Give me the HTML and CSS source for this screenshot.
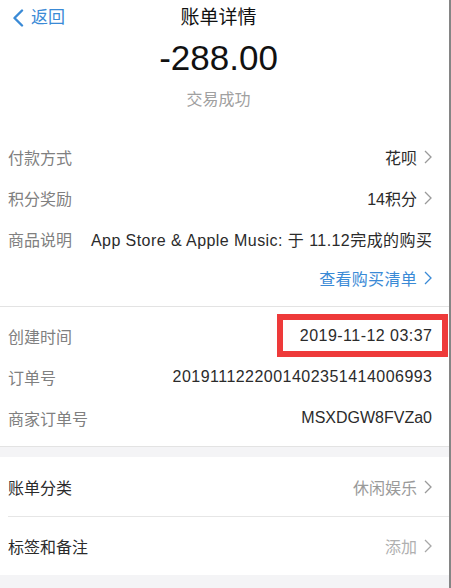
FILE: index.html
```html
<!DOCTYPE html>
<html lang="zh-CN">
<head>
<meta charset="utf-8">
<title>账单详情</title>
<link rel="stylesheet" href="styles.css">
</head>
<body>
<div class="page">
  <header class="nav">
    <a class="back">
      <svg class="back-icon" width="12" height="18" viewBox="0 0 12 18"><polyline points="10,1.5 2.5,9 10,16.5" fill="none" stroke="#3a8ad6" stroke-width="2.4" stroke-linecap="round" stroke-linejoin="round"/></svg>
      <span>返回</span>
    </a>
    <h1 class="title">账单详情</h1>
  </header>

  <section class="summary">
    <div class="amount">-288.00</div>
    <div class="status">交易成功</div>
  </section>

  <section class="group group-info">
    <div class="row">
      <span class="label">付款方式</span>
      <span class="value">花呗<svg class="chev" width="8" height="14" viewBox="0 0 8 14"><polyline points="1,1 7,7 1,13" fill="none" stroke="#9a9a9a" stroke-width="1.3"/></svg></span>
    </div>
    <div class="row">
      <span class="label">积分奖励</span>
      <span class="value">14积分<svg class="chev" width="8" height="14" viewBox="0 0 8 14"><polyline points="1,1 7,7 1,13" fill="none" stroke="#9a9a9a" stroke-width="1.3"/></svg></span>
    </div>
    <div class="row">
      <span class="label">商品说明</span>
      <span class="value desc">App Store &amp; Apple Music: 于 11.12完成的购买</span>
    </div>
    <div class="row link-row">
      <span class="link">查看购买清单<svg class="chev" width="8" height="14" viewBox="0 0 8 14"><polyline points="1,1 7,7 1,13" fill="none" stroke="#3a8ad6" stroke-width="1.3"/></svg></span>
    </div>
  </section>

  <section class="group group-order">
    <div class="row">
      <span class="label">创建时间</span>
      <span class="value num">2019-11-12 03:37</span>
      <span class="highlight"></span>
    </div>
    <div class="row">
      <span class="label">订单号</span>
      <span class="value num">2019111222001402351414006993</span>
    </div>
    <div class="row">
      <span class="label">商家订单号</span>
      <span class="value">MSXDGW8FVZa0</span>
    </div>
  </section>

  <div class="gap"></div>

  <section class="group group-extra">
    <div class="row big">
      <span class="label dark">账单分类</span>
      <span class="value muted">休闲娱乐<svg class="chev" width="8" height="14" viewBox="0 0 8 14"><polyline points="1,1 7,7 1,13" fill="none" stroke="#9a9a9a" stroke-width="1.3"/></svg></span>
    </div>
    <div class="row big">
      <span class="label dark">标签和备注</span>
      <span class="value faint">添加<svg class="chev" width="8" height="14" viewBox="0 0 8 14"><polyline points="1,1 7,7 1,13" fill="none" stroke="#a8a8a8" stroke-width="1.3"/></svg></span>
    </div>
  </section>

  <div class="bottom"></div>
</div>
</body>
</html>
```

FILE: styles.css
```css
* { box-sizing: border-box; }
html, body { margin: 0; padding: 0; }
body {
  width: 451px;
  height: 588px;
  overflow: hidden;
  background: #ffffff;
  font-family: "Liberation Sans", "Noto Sans CJK SC", sans-serif;
  color: #333333;
}
.page {
  width: 451px;
  height: 588px;
  border-right: 2px solid #858585;
  display: flex;
  flex-direction: column;
  background: #ffffff;
}
.nav {
  position: relative;
  height: 36px;
  display: flex;
  align-items: center;
  justify-content: center;
  padding-right: 12px;
}
.back {
  position: absolute;
  left: 12px;
  top: 9px;
  display: flex;
  align-items: center;
  gap: 7px;
  color: #3a8ad6;
  font-size: 17px;
  line-height: 18px;
}
.title {
  margin: 0;
  font-size: 19px;
  font-weight: normal;
  color: #111111;
  line-height: 38px;
}
.summary {
  display: flex;
  flex-direction: column;
  align-items: center;
  padding-right: 12px;
  height: 100px;
}
.amount {
  font-size: 35px;
  line-height: 40px;
  margin-top: 2px;
  color: #111111;
}
.status {
  font-size: 16px;
  line-height: 20px;
  margin-top: 12px;
  color: #a0a0a0;
}
.group {
  display: flex;
  flex-direction: column;
  padding-left: 8px;
}
.row {
  position: relative;
  height: 41px;
  display: flex;
  align-items: center;
  justify-content: space-between;
  padding-right: 17px;
  font-size: 16px;
}
.label { color: #808080; white-space: nowrap; }
.label.dark { color: #2b2b2b; }
.value {
  display: flex;
  align-items: center;
  color: #2b2b2b;
  white-space: nowrap;
}
.value.desc { letter-spacing: 0.44px; margin-right: -0.4px; }
.value.num { letter-spacing: 0.47px; margin-right: -0.5px; }
.value.muted { color: #9a9a9a; }
.value.faint { color: #b0b0b0; }
.chev { margin-left: 7px; }
.group-info { padding-bottom: 10px; border-bottom: 1px solid #e3e3e3; }
.link-row { height: 37px; justify-content: flex-end; }
.link { display: flex; align-items: center; color: #3a8ad6; letter-spacing: 0.3px; }
.group-order { padding-top: 8px; padding-bottom: 8px; border-bottom: 1px solid #e3e3e3; }
.highlight {
  position: absolute;
  right: 1px;
  top: -1px;
  width: 171px;
  height: 43px;
  border: 6px solid #ee3a3a;
}
.gap { height: 10px; background: #f4f4f6; }
.group-extra { padding-left: 8px; }
.row.big { height: 59px; }
.row.big + .row.big { border-top: 1px solid #e6e6e6; }
.bottom { flex: 1; background: #f4f4f6; }
```
